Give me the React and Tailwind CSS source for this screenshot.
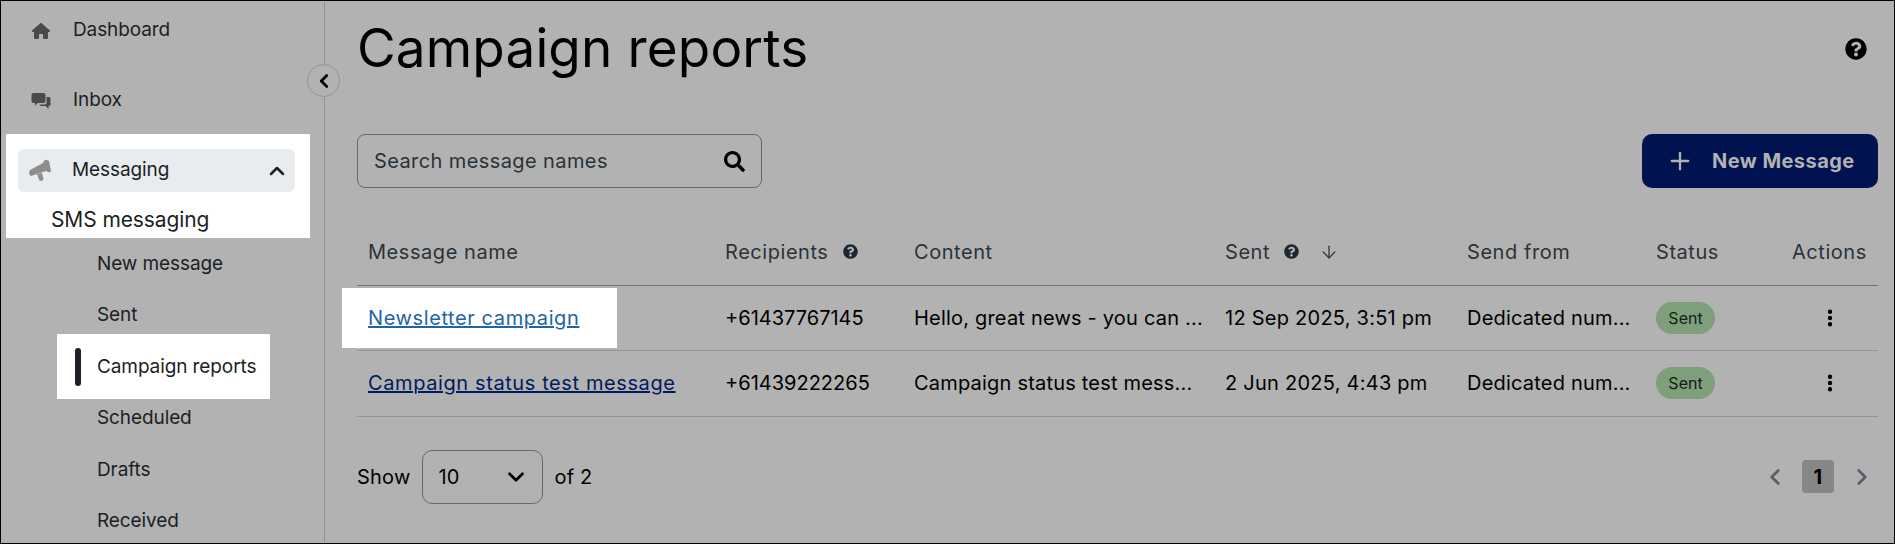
import React from "react";
import { FaHouse, FaEllipsisVertical } from "react-icons/fa6";
import { FaSearch, FaQuestionCircle } from "react-icons/fa";
import { ChevronUp, ChevronDown, ChevronLeft, ChevronRight, ArrowDown, Plus } from "lucide-react";

const subItems = ["New message", "Sent", "Campaign reports", "Scheduled", "Drafts", "Received"];

const rows = [
  {
    name: "Newsletter campaign",
    to: "+61437767145",
    content: "Hello, great news - you can ...",
    sent: "12 Sep 2025, 3:51 pm",
  },
  {
    name: "Campaign status test message",
    to: "+61439222265",
    content: "Campaign status test mess...",
    sent: "2 Jun 2025, 4:43 pm",
  },
];

const ChatIcon = () => (
  <svg viewBox="0 0 20 18" className="w-[20px] h-[18px] text-[#4a4a4a]" fill="currentColor">
    <path d="M2.5 1h10a2 2 0 0 1 2 2v6a2 2 0 0 1-2 2H7l-3 2.5V11H2.5a2 2 0 0 1-2-2V3a2 2 0 0 1 2-2z" />
    <path d="M15.5 5H18a1.5 1.5 0 0 1 1.5 1.5v6A1.5 1.5 0 0 1 18 14h-.5v3l-3-3H9l-.5-1.5h5a2 2 0 0 0 2-2z" />
  </svg>
);

const MegaphoneIcon = () => (
  <svg viewBox="0 0 23 23" className="w-[23px] h-[23px] text-[#8d8d8d]" fill="currentColor">
    <path d="M1 11 14 4 15 2Q16 0 18 1L20 2 22 12Q21 14 19 13L17 12 2 17Q0 16 0 14Z" />
    <path d="M8 15 13 14 14.5 20Q14 22 12 22L10.5 21.5Z" />
  </svg>
);

const Sidebar = () => (
  <aside className="w-[324px] h-full shrink-0 border-r border-[#8b949b] relative text-[19px] tracking-[-0.1px] text-[#1b1f24]">
    <div className="pt-[8px]">
      <div className="flex items-center h-[43px] pl-[31px] gap-[23px]">
        <FaHouse className="w-[18px] h-[18px] text-[#4a4a4a]" />
        <span>Dashboard</span>
      </div>
      <div className="flex items-center h-[43px] mt-[27px] pl-[30px] gap-[22px]">
        <ChatIcon />
        <span>Inbox</span>
      </div>
      {/* highlighted group */}
      <div className="bg-white mt-[12px] ml-[5px] w-[304px] h-[104px] pt-[15px] pl-[12px]">
        <div className="flex items-center w-[277px] h-[43px] rounded-md bg-[#e9ecef] pl-[11px] pr-[6px]">
          <MegaphoneIcon />
          <span className="ml-[20px]">Messaging</span>
          <ChevronUp className="ml-auto w-[24px] h-[24px]" strokeWidth={2.5} />
        </div>
        <div className="pl-[33px] pt-[13px] text-[21px] tracking-[-0.1px] leading-[30px]">SMS messaging</div>
      </div>
      <ul>
        {subItems.map((item) =>
          item === "Campaign reports" ? (
            <li key={item} className="relative -my-[6.6px] h-[65px] ml-[56px] w-[213px] bg-white flex items-center pl-[18px]">
              <span className="w-[6px] h-[38px] rounded-sm bg-[#1d2127]" />
              <span className="ml-[16px]">{item}</span>
            </li>
          ) : (
            <li key={item} className="h-[51.5px] flex items-center pl-[96px]">
              {item}
            </li>
          )
        )}
      </ul>
    </div>
    <button className="absolute left-[306px] top-[63px] w-[33px] h-[33px] rounded-full border border-[#8b949b] bg-[#b2b2b2] flex items-center justify-center">
      <ChevronLeft className="w-[22px] h-[22px] text-black" strokeWidth={3} />
    </button>
  </aside>
);

const Table = () => (
  <table className="w-full table-fixed mt-[35px] text-[20px] tracking-[0.55px] text-black">
    <colgroup>
      <col className="w-[357px]" />
      <col className="w-[189px]" />
      <col className="w-[311px]" />
      <col className="w-[242px]" />
      <col className="w-[189px]" />
      <col className="w-[136px]" />
      <col className="w-[97px]" />
    </colgroup>
    <thead>
      <tr className="h-[62px] border-b border-[#6c7680] text-left text-[#2b3238]">
        <th className="font-normal pl-[11px] pb-[4px]">Message name</th>
        <th className="font-normal pl-[11px] pb-[4px]">
          <span className="flex items-center">
            Recipients
            <FaQuestionCircle className="ml-[15px] w-[15px] h-[15px] text-[#1d2733]" />
          </span>
        </th>
        <th className="font-normal pl-[11px] pb-[4px]">Content</th>
        <th className="font-normal pl-[11px] pb-[4px]">
          <span className="flex items-center">
            Sent
            <FaQuestionCircle className="ml-[14px] w-[15px] h-[15px] text-[#1d2733]" />
            <ArrowDown className="ml-[20px] w-[20px] h-[20px]" strokeWidth={1.5} />
          </span>
        </th>
        <th className="font-normal pl-[11px] pb-[4px]">Send from</th>
        <th className="font-normal pl-[11px] pb-[4px]">Status</th>
        <th className="font-normal pl-[11px] pb-[4px]">Actions</th>
      </tr>
    </thead>
    <tbody>
      {rows.map((row, i) => (
        <tr key={row.name} className="h-[65.5px] border-b border-[#8f9699]">
          <td className="pl-[11px] whitespace-nowrap tracking-[0.6px]">
            {i === 0 ? (
              <span className="inline-block -ml-[26px] bg-white w-[275px] h-[60px] pl-[26px] leading-[60px]">
                <a className="underline text-[#1f64a8]">{row.name}</a>
              </span>
            ) : (
              <a className="underline text-[#001a5e]">{row.name}</a>
            )}
          </td>
          <td className="pl-[11px] tracking-normal">{row.to}</td>
          <td className="pl-[11px] whitespace-nowrap tracking-[0.2px]">{row.content}</td>
          <td className="pl-[11px] whitespace-nowrap tracking-[0.25px]">{row.sent}</td>
          <td className="pl-[11px] whitespace-nowrap tracking-[0.2px]">Dedicated num...</td>
          <td className="pl-[11px]">
            <span className="inline-flex items-center justify-center w-[59px] h-[32px] rounded-full bg-[#7e9f79] text-[16px] tracking-normal text-[#12211a]">Sent</span>
          </td>
          <td className="pl-[39px]">
            <FaEllipsisVertical className="w-[20px] h-[20px]" />
          </td>
        </tr>
      ))}
    </tbody>
  </table>
);

export default function App() {
  return (
    <div className="w-[1895px] h-[544px] flex overflow-hidden border border-black bg-[#b2b2b2] font-['Inter',sans-serif]">
      <Sidebar />
      <main className="flex-1 pl-[32px] pr-[16px]">
        <div className="flex items-center justify-between h-[97px]">
          <h1 className="text-[53px] tracking-[0.15px] leading-none text-black -mt-[3px]">Campaign reports</h1>
          <FaQuestionCircle className="w-[22px] h-[22px] text-black mr-[11px] -mt-[2px]" />
        </div>
        <div className="flex items-center justify-between mt-[36px]">
          <div className="flex items-center justify-between w-[405px] h-[54px] rounded-lg border border-[#5f6b75] pl-[16px] pr-[16px] text-[20px] tracking-[0.4px] text-[#2b3238]">
            <span>Search message names</span>
            <FaSearch className="w-[21px] h-[21px] text-black" />
          </div>
          <button className="flex items-center w-[236px] h-[54px] rounded-[10px] bg-[#00124f] pl-[24px] text-[#b2b2b2] text-[20px] font-bold tracking-[0.45px]">
            <Plus className="w-[28px] h-[28px]" strokeWidth={2} />
            <span className="ml-[18px]">New Message</span>
          </button>
        </div>
        <Table />
        <div className="flex items-center justify-between mt-[33px] text-[20px] tracking-[0.2px] text-black">
          <div className="flex items-center">
            <span>Show</span>
            <div className="flex items-center justify-between ml-[12px] w-[121px] h-[54px] rounded-[10px] border border-[#5f6b75] pl-[15px] pr-[13px]">
              <span>10</span>
              <ChevronDown className="w-[26px] h-[26px]" strokeWidth={2.5} />
            </div>
            <span className="ml-[11px]">of 2</span>
          </div>
          <div className="flex items-center mr-[3px]">
            <ChevronLeft className="w-[26px] h-[26px] text-[#56606a]" strokeWidth={2.5} />
            <span className="ml-[14px] w-[32px] h-[33px] rounded bg-[#868686] flex items-center justify-center font-bold text-[20px]">1</span>
            <ChevronRight className="ml-[15px] w-[26px] h-[26px] text-[#56606a]" strokeWidth={2.5} />
          </div>
        </div>
      </main>
    </div>
  );
}
